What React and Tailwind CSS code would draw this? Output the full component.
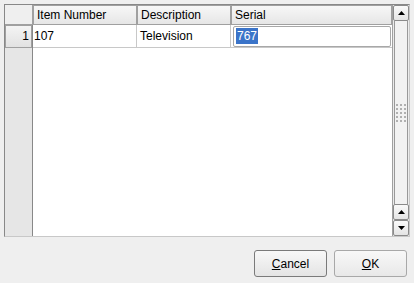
import React from "react";

const HeaderCell = ({ className = "", children }) => (
  <div
    className={`h-full border border-[#a0a0a0] bg-gradient-to-b from-[#f7f7f7] to-[#e6e6e6] px-[3px] leading-[18px] ${className}`}
  >
    {children}
  </div>
);

const ArrowBtn = ({ up, className = "" }) => (
  <div
    className={`flex h-[16px] w-[16px] items-center justify-center rounded-[2px] border border-[#8a8a8a] bg-gradient-to-b from-[#fafafa] to-[#e4e4e4] ${className}`}
  >
    <svg width="7" height="4" viewBox="0 0 7 4">
      {up ? <polygon points="3.5,0 7,4 0,4" fill="#000" /> : <polygon points="0,0 7,0 3.5,4" fill="#000" />}
    </svg>
  </div>
);

export default function App() {
  return (
    <div className="h-[283px] w-[414px] bg-[#efefef] font-['Liberation_Sans',Arial,sans-serif] text-[12px] text-black">
      <div className="p-[4px] pb-0">
        {/* Table frame */}
        <div className="flex h-[233px] border-t border-l border-t-[#888] border-l-[#888] border-r border-b border-r-[#c8c8c8] border-b-[#c8c8c8] bg-white">
          <div className="flex flex-1 flex-col">
            {/* header row */}
            <div className="flex h-[20px] bg-[#efefef]">
              <div className="w-[28px] border-r border-b border-[#a0a0a0] bg-[#efefef]" />
              <HeaderCell className="w-[104px]">Item Number</HeaderCell>
              <HeaderCell className="w-[94px]">Description</HeaderCell>
              <HeaderCell className="flex-1">Serial</HeaderCell>
            </div>
            <div className="flex flex-1">
              {/* row headers */}
              <div className="flex w-[28px] flex-col border-r border-[#888] bg-[#e4e4e4]">
                <div className="h-[23px] border border-[#a0a0a0] bg-gradient-to-b from-[#f4f4f4] to-[#e2e2e2] pr-[2px] text-right leading-[21px]">
                  1
                </div>
                <div className="flex-1 bg-[#e6e6e6]" />
              </div>
              <div className="flex flex-1 flex-col">
                <div className="flex h-[23px] border-b border-[#c8c8c8]">
                  <div className="w-[104px] border-r border-[#c8c8c8] pl-[1px] leading-[22px]">107</div>
                  <div className="w-[94px] border-r border-[#c8c8c8] pl-[3px] leading-[22px]">Television</div>
                  <div className="flex flex-1 items-center pl-[2px] pr-[1px]">
                    <div className="flex h-[21px] w-full items-center rounded-[2px] border border-[#a8a8a8] bg-white pl-[2px]">
                      <span className="inline-block h-[16px] bg-[#3b74c9] px-[1px] leading-[16px] text-white">767</span>
                    </div>
                  </div>
                </div>
                <div className="flex-1" />
              </div>
            </div>
          </div>
          {/* vertical scrollbar */}
          <div className="flex w-[17px] flex-col border-l border-[#a0a0a0] bg-[#ebebeb]">
            <ArrowBtn up />
            <div className="mx-[1px] flex flex-1 items-center justify-center border-x border-[#999] bg-[#f2f2f2]">
              <div className="grid grid-cols-3 gap-[2px]">
                {Array.from({ length: 15 }).map((_, i) => (
                  <div key={i} className="h-[2px] w-[2px] bg-[#b0b0b0]" />
                ))}
              </div>
            </div>
            <ArrowBtn up />
            <ArrowBtn />
          </div>
        </div>
      </div>
      {/* dialog buttons */}
      <div className="flex justify-end gap-[7px] pr-[7px] pt-[13px]">
        <button className="h-[27px] w-[73px] rounded-[3px] border border-[#7a7a7a] bg-gradient-to-b from-[#f8f8f8] to-[#e4e4e4]">
          <span className="underline">C</span>ancel
        </button>
        <button className="h-[27px] w-[73px] rounded-[3px] border border-[#a8a8a8] bg-gradient-to-b from-[#f8f8f8] to-[#e8e8e8]">
          <span className="underline">O</span>K
        </button>
      </div>
    </div>
  );
}
